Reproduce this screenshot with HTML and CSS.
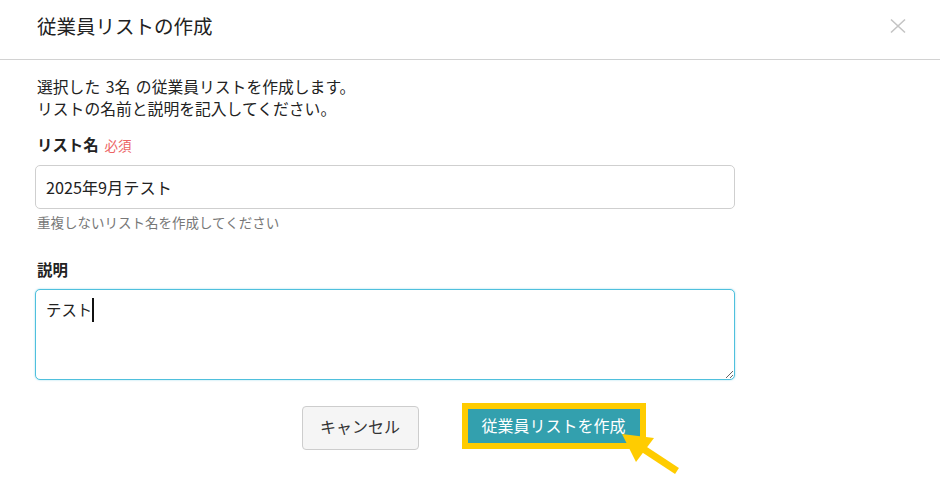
FILE: index.html
```html
<!DOCTYPE html>
<html lang="ja">
<head>
<meta charset="utf-8">
<title>従業員リストの作成</title>
<link rel="stylesheet" href="styles.css">
</head>
<body>
<div class="modal">
  <header class="modal-header">
    <h1 class="modal-title">従業員リストの作成</h1>
    <button class="close" aria-label="閉じる">
      <svg width="16" height="16" viewBox="0 0 16 16"><path d="M1 1.5L15 14.5M15 1.5L1 14.5" stroke="#c4c4c4" stroke-width="1.6" fill="none"/></svg>
    </button>
  </header>
  <div class="modal-body">
    <p class="intro">選択した 3名 の従業員リストを作成します。<br>リストの名前と説明を記入してください。</p>
    <label class="label label-name">リスト名<span class="required">必須</span></label>
    <input class="input" type="text" value="2025年9月テスト">
    <p class="help">重複しないリスト名を作成してください</p>
    <label class="label label-desc">説明</label>
    <div class="textarea-wrap">
      <textarea class="textarea">テスト</textarea>
      <span class="caret"></span>
    </div>
    <div class="actions">
      <button class="btn btn-cancel">キャンセル</button>
      <div class="highlight">
        <button class="btn btn-primary">従業員リストを作成</button>
        <svg class="arrow" width="75" height="55" viewBox="0 0 75 55"><polygon points="11,10 43,14 25,38" fill="#ffcc00"/><line x1="31" y1="24" x2="66" y2="47" stroke="#ffcc00" stroke-width="7"/></svg>
      </div>
    </div>
  </div>
</div>
</body>
</html>
```

FILE: styles.css
```css
* { box-sizing: border-box; }
html, body { margin: 0; padding: 0; background: #fff; }
body {
  font-family: "Noto Sans CJK JP", "Noto Sans", "Liberation Sans", sans-serif;
  color: #222;
  width: 940px;
  height: 493px;
  overflow: hidden;
}
.modal-header {
  height: 60px;
  border-bottom: 1px solid #d2d2d2;
  display: flex;
  justify-content: space-between;
  align-items: flex-start;
  padding: 14px 34px 0 37px;
}
.modal-title {
  margin: 0;
  font-size: 19.5px;
  font-weight: 400;
  line-height: 24px;
  color: #222;
}
.close {
  border: 0;
  background: none;
  padding: 0;
  margin-top: 4px;
  width: 16px;
  height: 16px;
  display: flex;
}
.modal-body {
  padding: 0 205px 0 35px;
}
.intro {
  margin: 16px 0 0 2px;
  font-size: 15.8px;
  line-height: 22px;
  word-spacing: 2px;
}
.label {
  display: block;
  font-weight: 700;
  font-size: 15.4px;
  line-height: 22px;
  margin-left: 2px;
}
.label-name { margin-top: 13px; }
.label-desc { margin-top: 26px; }
.required {
  color: #ec6464;
  font-weight: 400;
  font-size: 13.5px;
  margin-left: 6px;
}
.input {
  display: block;
  width: 700px;
  height: 44px;
  margin-top: 9px;
  border: 1px solid #cfcfcf;
  border-radius: 5px;
  padding: 0 10px;
  font-family: inherit;
  font-size: 16.2px;
  color: #222;
  outline: none;
}
.help {
  margin: 3px 0 0 2px;
  font-size: 13.5px;
  line-height: 20px;
  color: #777;
}
.textarea-wrap {
  position: relative;
  margin-top: 9px;
  width: 700px;
  height: 91px;
}
.textarea {
  display: block;
  width: 700px;
  height: 91px;
  border: 1px solid #4fc0dd;
  border-radius: 5px;
  box-shadow: 0 0 2px rgba(79, 192, 221, 0.6);
  padding: 7px 10px;
  font-family: inherit;
  font-size: 15.4px;
  line-height: 24px;
  color: #222;
  resize: vertical;
  outline: none;
}
.caret {
  position: absolute;
  left: 57px;
  top: 9px;
  width: 2px;
  height: 24px;
  background: #111;
}
.actions {
  display: flex;
  justify-content: center;
  align-items: flex-start;
  gap: 43px;
  margin-top: 23px;
  margin-left: -35px;
  width: 940px;
  padding-left: 7px;
}
.btn {
  font-family: inherit;
  font-size: 16px;
  cursor: pointer;
}
.btn-cancel {
  margin-top: 3px;
  width: 117px;
  height: 44px;
  background: #f5f5f5;
  border: 1px solid #cdcdcd;
  border-radius: 4px;
  color: #333;
  padding: 0 0 4px;
}
.highlight {
  position: relative;
  border: 6px solid #ffcc00;
}
.btn-primary {
  display: block;
  width: 172px;
  height: 34px;
  background: #33a0ae;
  border: 0;
  border-radius: 0;
  color: #fff;
  padding: 0 0 2px;
}
.arrow {
  position: absolute;
  left: 143px;
  top: 15px;
}
```
